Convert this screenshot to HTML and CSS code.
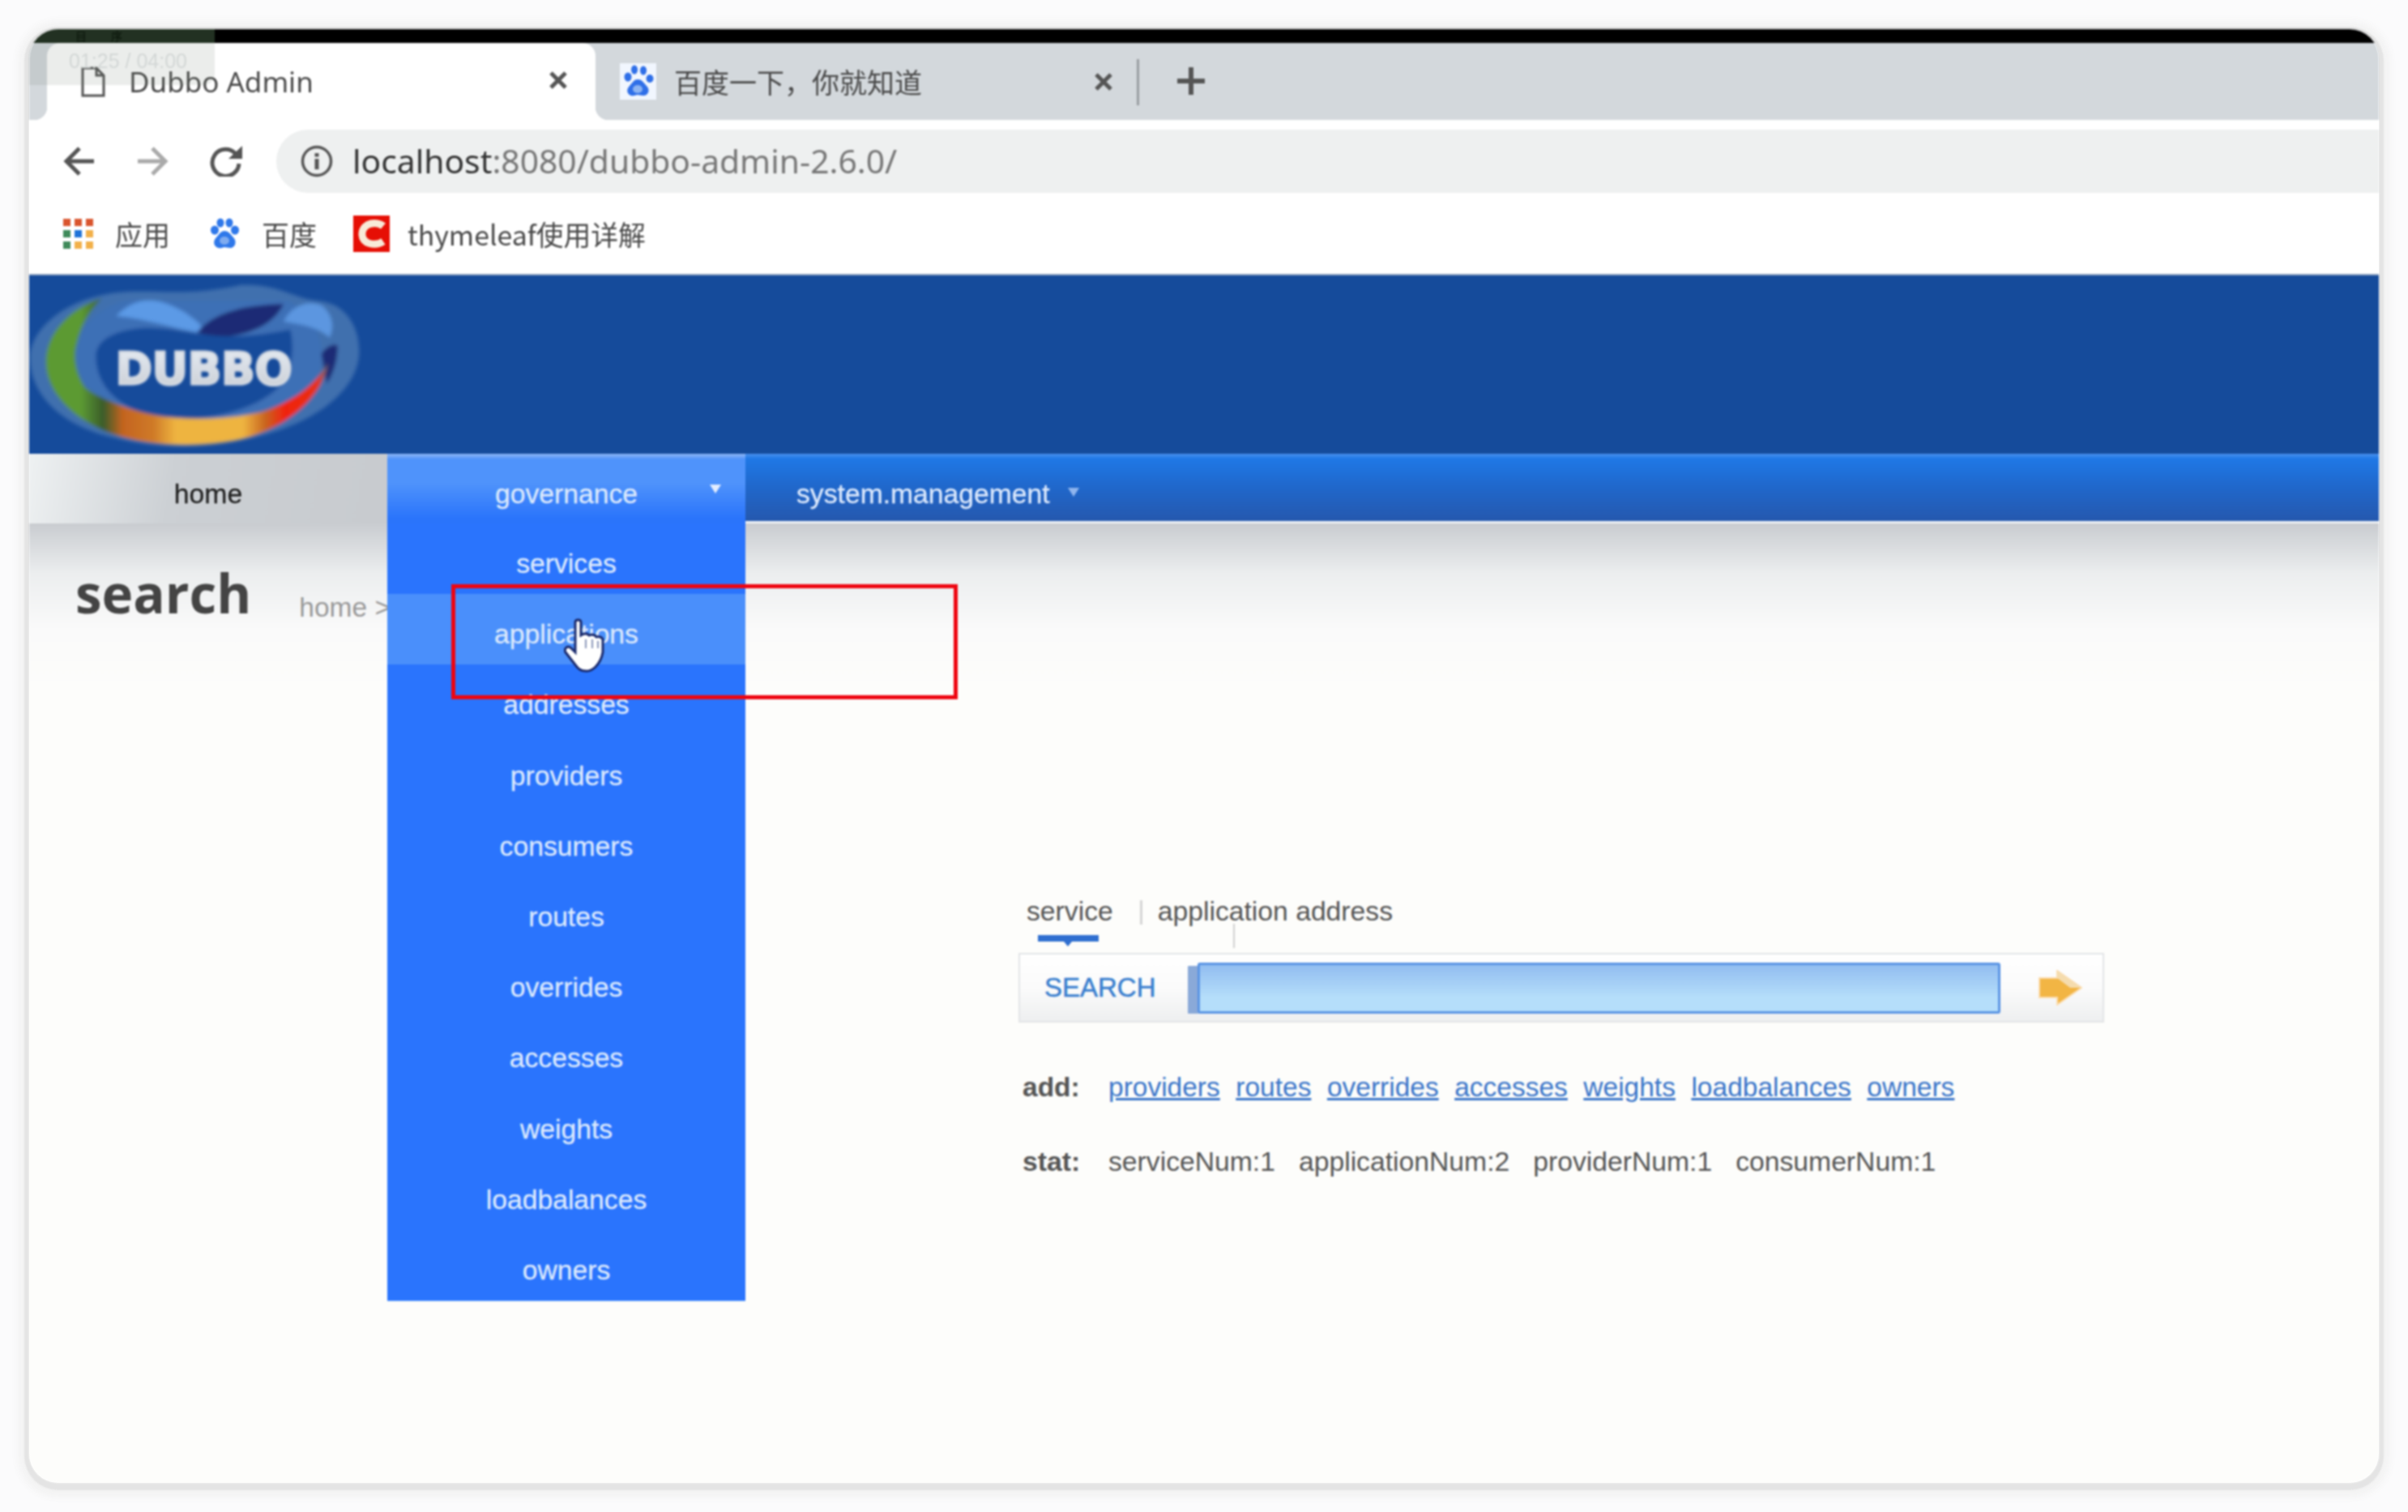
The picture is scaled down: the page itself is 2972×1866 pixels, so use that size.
FILE: index.html

```html
<!DOCTYPE html>
<html lang="en">
<head>
  <meta charset="UTF-8" />
  <title>Dubbo Admin</title>
  <link rel="stylesheet" href="styles.css">
</head>
<body>
  <div class="window">
    <div class="capbar"></div>

    <div class="tabstrip">
      <div class="tab tab-active">
        <svg class="doc-icon" viewBox="0 0 30 38"><path d="M2 2H19L28 11V36H2Z M19 2V11H28" fill="#fff" stroke="#555" stroke-width="3"/></svg>
        <span class="tab-title tab-title-en">Dubbo Admin</span>
        <svg class="close-icon" viewBox="0 0 22 22"><path d="M2 2L20 20M20 2L2 20" stroke="#555" stroke-width="5"/></svg>
      </div>
      <div class="tab">
        <svg class="paw paw-tab" viewBox="0 0 45 45">
          <rect width="45" height="45" fill="#f1f6fe"/>
          <g fill="#2f6fe8">
            <ellipse cx="10" cy="17" rx="4.5" ry="5.5"/>
            <ellipse cx="18" cy="8" rx="4" ry="5.5"/>
            <ellipse cx="29" cy="9" rx="4" ry="5.5"/>
            <ellipse cx="37" cy="19" rx="4.5" ry="5"/>
            <path d="M22 20C28 20 30 25 33 28C38 33 35 40 29 40C26 40 24 39 22 39C19 39 17 41 14 40C8 38 8 32 12 28C15 25 17 20 22 20Z"/>
          </g>
          <ellipse cx="22" cy="32" rx="6" ry="5" fill="#8db4f2"/>
        </svg>
        <span class="tab-title">百度一下，你就知道</span>
        <svg class="close-icon" viewBox="0 0 22 22"><path d="M2 2L20 20M20 2L2 20" stroke="#555" stroke-width="5"/></svg>
      </div>
      <div class="tab-sep"></div>
      <svg class="plus-icon" viewBox="0 0 34 34"><path d="M17 0V34M0 17H34" stroke="#555" stroke-width="6"/></svg>
    </div>

    <div class="toolbar">
      <svg class="nav-icon" viewBox="0 0 40 38"><path d="M38 19H5M20 3L4 19L20 35" fill="none" stroke="#555" stroke-width="5"/></svg>
      <svg class="nav-icon nav-forward" viewBox="0 0 40 38"><path d="M2 19H35M20 3L36 19L20 35" fill="none" stroke="#aaa" stroke-width="5"/></svg>
      <svg class="nav-icon nav-reload" viewBox="0 0 42 38"><path d="M33 10A16.5 16.5 0 1 0 37 22" fill="none" stroke="#555" stroke-width="5"/><path d="M24 16H41V0Z" fill="#555"/></svg>
      <div class="omnibox">
        <svg class="info-icon" viewBox="0 0 40 40"><circle cx="20" cy="20" r="17.5" fill="none" stroke="#555" stroke-width="3.5"/><rect x="17.500" y="17" width="5" height="13" fill="#555"/><rect x="17.500" y="10" width="5" height="4.500" fill="#555"/></svg>
        <span class="url"><b>localhost</b>:8080/dubbo-admin-2.6.0/</span>
      </div>
    </div>

    <div class="bookmarks">
      <div class="apps-grid">
        <i class="dot-a"></i><i class="dot-a"></i><i class="dot-a"></i>
        <i class="dot-b"></i><i class="dot-c"></i><i class="dot-d"></i>
        <i class="dot-b"></i><i class="dot-d"></i><i class="dot-d"></i>
      </div>
      <span class="mark mark-apps">应用</span>
      <svg class="paw paw-mark" viewBox="0 0 37 38">
        <g fill="#2f78ea">
          <ellipse cx="6" cy="15" rx="5" ry="5.500"/>
          <ellipse cx="13" cy="6" rx="4.500" ry="5.500"/>
          <ellipse cx="24" cy="6" rx="4.500" ry="5.500"/>
          <ellipse cx="31" cy="15" rx="5" ry="5.500"/>
          <path d="M18 16C24 16 26 21 29 24C34 29 31 37 25 37C22 37 20 36 18 36C16 36 14 38 11 37C5 36 3 29 8 24C11 21 13 16 18 16Z"/>
        </g>
        <ellipse cx="18" cy="28" rx="6" ry="5" fill="#7fabef"/>
      </svg>
      <span class="mark mark-baidu">百度</span>
      <svg class="csdn-icon" viewBox="0 0 45 45"><rect width="45" height="45" fill="#e60f05"/><path d="M37 13C30 7 12 8 11 22C10 36 28 38 37 32" fill="none" stroke="#f8ead8" stroke-width="9"/></svg>
      <span class="mark mark-thyme">thymeleaf使用详解</span>
    </div>

    <div class="banner">
      <svg class="logo" viewBox="18 0 1332 660">
        <defs>
          <linearGradient id="band" x1="85" y1="0" x2="1120" y2="0" gradientUnits="userSpaceOnUse">
            <stop offset="0" stop-color="#5c9a33"/>
            <stop offset=".12" stop-color="#5c9a33"/>
            <stop offset=".2" stop-color="#3a5c2a"/>
            <stop offset=".27" stop-color="#c4641f"/>
            <stop offset=".38" stop-color="#cf7a28"/>
            <stop offset=".46" stop-color="#eeb440"/>
            <stop offset=".7" stop-color="#eeb440"/>
            <stop offset=".78" stop-color="#c9651f"/>
            <stop offset=".85" stop-color="#f0230f"/>
            <stop offset=".97" stop-color="#e8300f"/>
            <stop offset="1" stop-color="#776a60"/>
          </linearGradient>
          <linearGradient id="steel" x1="0" y1="0" x2="0" y2="1">
            <stop offset="0" stop-color="#e8eef5"/>
            <stop offset="1" stop-color="#c6cbd2"/>
          </linearGradient>
          <filter id="soft"><feGaussianBlur stdDeviation="7"/></filter>
          <filter id="softer"><feGaussianBlur stdDeviation="2.500"/></filter>
        </defs>
        <g filter="url(#soft)">
          <path d="M20 300C30 180 180 70 380 60C520 55 620 75 800 35C950 30 1000 90 1100 95C1200 110 1240 200 1240 280C1240 420 1080 560 800 610C650 640 480 640 330 600C150 560 20 450 20 300Z" fill="#406fae"/>
          <path d="M190 300C190 190 300 90 420 90C560 100 700 90 980 95C1080 150 1110 240 1100 330C1070 480 800 560 600 560C350 550 190 440 190 300Z" fill="#3c6fb6"/>
          <path d="M340 150C420 70 500 80 600 140C640 170 680 195 640 210C550 195 450 160 340 150Z" fill="#5b9ae6"/>
          <path d="M640 210C700 140 800 110 960 105C930 170 860 210 760 225C710 228 670 222 640 210Z" fill="#1f2a75"/>
          <path d="M960 170C990 110 1050 90 1100 110C1140 140 1150 190 1130 230C1090 190 1020 180 960 170Z" fill="#5b96e0"/>
          <path d="M1100 290C1120 260 1150 250 1160 260C1160 320 1140 370 1120 400Z" fill="#1f2a75"/>
          <path d="M265 300C265 240 330 205 430 195C560 190 640 225 760 225C850 225 930 210 985 200C1000 260 1000 380 910 440C800 520 600 550 480 520C340 490 265 400 265 300Z" fill="#154b9b"/>
          <path d="M285 85C160 125 80 220 80 320C80 425 170 520 290 572C420 628 620 642 785 610C940 578 1095 475 1125 325C1075 410 990 470 880 505C760 535 570 540 450 510C340 480 250 440 222 410C190 360 180 300 195 250C210 180 245 130 285 85Z" fill="url(#band)"/>
        </g>
        <text class="logo-text" x="338" y="403" textLength="654" lengthAdjust="spacingAndGlyphs" filter="url(#softer)">DUBBO</text>
      </svg>
    </div>

    <div class="nav">
      <div class="nav-item nav-home">home</div>
      <div class="nav-item nav-open">
        governance<i class="caret"></i>
        <ul class="dropdown">
          <li>services</li>
          <li class="hover">applications</li>
          <li>addresses</li>
          <li>providers</li>
          <li>consumers</li>
          <li>routes</li>
          <li>overrides</li>
          <li>accesses</li>
          <li>weights</li>
          <li>loadbalances</li>
          <li>owners</li>
        </ul>
      </div>
      <div class="nav-rest">system.management<i class="caret caret-dim"></i></div>
    </div>

    <div class="content">
      <div class="page-title">
        <h1>search</h1>
        <span class="crumb">home &gt;</span>
      </div>

      <div class="search-panel">
        <div class="search-tabs">
          <span class="stab stab-on">service</span>
          <span class="stab-sep"></span>
          <span class="stab">application address</span>
          <i class="stab-mark"></i>
          <i class="stab-line"></i>
        </div>
        <div class="search-box">
          <span class="search-label">SEARCH</span>
          <div class="search-input"></div>
          <svg class="go-arrow" viewBox="0 0 55 44"><path d="M2 10H24V1L54 22L24 43V34H2Z" fill="#f2b544" stroke="#fbdcae" stroke-width="2"/><path d="M24 10V1L54 22H40Z" fill="#f5dcae"/></svg>
        </div>
        <div class="info-row info-add">
          <b>add:</b>
          <a href="#">providers</a>
          <a href="#">routes</a>
          <a href="#">overrides</a>
          <a href="#">accesses</a>
          <a href="#">weights</a>
          <a href="#">loadbalances</a>
          <a href="#">owners</a>
        </div>
        <div class="info-row info-stat">
          <b>stat:</b>
          <span>serviceNum:1</span>
          <span>applicationNum:2</span>
          <span>providerNum:1</span>
          <span>consumerNum:1</span>
        </div>
      </div>
    </div>

    <div class="video-hud">
      <div class="hud-top">目序</div>
      <div class="hud-time">01:25 / 04:00</div>
    </div>
    <div class="red-box"></div>
    <svg class="hand" viewBox="0 0 52 70">
      <path d="M14 6Q14 3 17.500 3Q21 3 21 6V22Q27 18 31 22Q37 20 40 24Q46 23 48 27V43Q46 54 39 61Q33 67 26 66Q20 66 16 61L2 43Q0 40 3 37Q6 35 9 38L14 43Z" fill="#fff" stroke="#1b2b6e" stroke-width="3"/>
      <path d="M27 27V38M35 27V38M42 29V38" stroke="#8a96b8" stroke-width="2" fill="none"/>
    </svg>
  </div>
</body>
</html>
```

FILE: styles.css

```css
* { box-sizing: border-box; }
html, body { margin: 0; height: 100%; }
body { padding: 36px; background: #fbfbfc; font-family: 'Liberation Sans', Arial, sans-serif; overflow: hidden; }

.window {
  position: relative; width: 2900px; height: 1794px; display: flex; flex-direction: column;
  background: #fdfdfb; border-radius: 36px; overflow: hidden;
  filter: blur(.8px);
}
body::before {
  content: ""; position: fixed; left: 36px; top: 36px; width: 2900px; height: 1794px; border-radius: 36px;
  box-shadow: 0 3px 2px 6px #e4e4e4, 0 4px 10px 14px #f3f3f3;
}

.capbar { height: 17px; background: #000; flex: none; }

/* browser chrome */
.tabstrip { height: 95px; flex: none; background: #d3d8dc; display: flex; padding-left: 22px; position: relative; }
.tab { width: 677px; height: 95px; display: flex; align-items: center; position: relative; }
.tab-active { background: #fff; border-radius: 16px 16px 0 0; padding-left: 42px; }
.tab-active::before, .tab-active::after { content: ""; position: absolute; bottom: 0; width: 16px; height: 16px; }
.tab-active::before { left: -16px; background: radial-gradient(circle at 0 0, transparent 16px, #fff 16.500px); }
.tab-active::after { right: -16px; background: radial-gradient(circle at 100% 0, transparent 16px, #fff 16.500px); }
.doc-icon { width: 30px; height: 38px; flex: none; }
.tab-title { font-family: 'Noto Sans CJK SC', sans-serif; font-size: 34px; color: #4a4a4a; white-space: nowrap; }
.tab-title-en { font-family: 'Noto Sans', sans-serif; font-size: 35px; margin-left: 29px; width: 519px; }
.close-icon { width: 22px; height: 22px; flex: none; }
.tab-active .close-icon { margin-bottom: 4px; }
.tab-active + .tab { width: 638px; padding-left: 30px; }
.paw-tab { width: 45px; height: 45px; flex: none; }
.tab-active + .tab .tab-title { margin-left: 22px; width: 519px; }
.tab-sep { width: 3px; height: 57px; background: #9a9ea2; margin: 20px 0 0 30px; }
.plus-icon { width: 34px; height: 34px; margin: 30px 0 0 47px; }

.toolbar { height: 90px; flex: none; background: #fff; display: flex; align-items: flex-start; padding: 12px 0 0 42px; }
.nav-icon { width: 40px; height: 38px; margin-top: 20px; flex: none; }
.nav-forward { margin-left: 50px; }
.nav-reload { margin-left: 50px; width: 42px; }
.omnibox { margin-left: 41px; flex: 1; height: 78px; background: #eef0f0; border-radius: 39px 0 0 39px; display: flex; align-items: center; padding-left: 30px; }
.info-icon { width: 40px; height: 40px; flex: none; }
.url { margin-left: 24px; margin-bottom: 2px; font-family: 'Noto Sans', sans-serif; font-size: 40.800px; color: #777; white-space: nowrap; }
.url b { font-weight: 400; color: #333; }

.bookmarks { height: 100px; flex: none; background: #fff; display: flex; align-items: center; padding: 0 0 0 42px; }
.apps-grid { width: 37px; height: 37px; display: grid; grid-template-columns: repeat(3, 9px); grid-auto-rows: 9px; gap: 5px; flex: none; }
.apps-grid i { display: block; }
.dot-a { background: #d9552e; }
.dot-b { background: #3f8a5a; }
.dot-c { background: #1f73d8; }
.dot-d { background: #f2b04a; }
.mark { font-family: 'Noto Sans CJK SC', sans-serif; font-size: 34px; color: #4a4a4a; white-space: nowrap; }
.mark-apps { margin-left: 27px; }
.paw-mark { width: 37px; height: 38px; margin-left: 49px; flex: none; }
.mark-baidu { margin-left: 27px; }
.csdn-icon { width: 45px; height: 45px; margin-left: 45px; flex: none; }
.mark-thyme { margin-left: 22px; font-size: 33.800px; }

/* dubbo page */
.banner { height: 222px; flex: none; background: #154b9b; border-top: 2px solid #8aa0c0; }
.logo { display: block; width: 444px; height: 220px; }
.logo-text { font-family: 'DejaVu Sans', sans-serif; font-weight: 700; font-size: 164px; fill: url(#steel); stroke: #d8dde4; stroke-width: 9px; }

.nav { height: 86px; flex: none; display: flex; font-size: 33.700px; position: relative; z-index: 2; -webkit-text-stroke: .3px; }
.nav-item { width: 442px; text-align: center; padding-top: 29px; line-height: 40px; position: relative; }
.nav-home { color: #222; background: linear-gradient(100deg, #eef1f2, #ccd0d4 40%, #c8cbcf); }
.nav-open { color: #dce9fd; background: linear-gradient(#8db6f6 0, #4f93fb 7px, #4f93fb 36px, #2a74fb 80px); }
.nav-rest { flex: 1; height: 86px; padding: 29px 0 0 63px; line-height: 40px; color: #dce9fd; background: linear-gradient(#4a90ee 0, #1f78e6 6px, #2068cc 40px, #2558ae 83px); border-bottom: 3px solid #eef2f6; }
.caret { position: absolute; right: 30px; top: 38px; border-left: 7px solid transparent; border-right: 7px solid transparent; border-top: 11px solid #e3edfe; }
.caret-dim { position: static; display: inline-block; margin: 0 0 0 22px; vertical-align: 8px; border-top-color: #8fb5ee; }

.dropdown { position: absolute; left: 0; top: 86px; width: 442px; margin: 0; padding: 0; list-style: none; background: #2a74fd; border-bottom: 1px solid #8fbdf8; }
.dropdown li { height: 87.200px; padding-top: 13px; line-height: 73px; text-align: center; color: #dce9fd; }
.dropdown li.hover { background: #4a8ffb; }

.content { flex: 1; background: linear-gradient(#c9ccd0 0, #eceeef 62px, #fafafa 130px, #fdfdfb 200px); }
.page-title { height: 120px; padding: 46px 0 0 57px; display: flex; align-items: flex-start; }
.page-title h1 { margin: 0; font-family: 'Open Sans', sans-serif; font-weight: 700; font-size: 65.500px; line-height: 80px; color: #444; }
.crumb { margin: 38px 0 0 59px; font-size: 33.500px; line-height: 40px; color: #999; white-space: nowrap; }

.search-panel { margin: 339px 0 0 1221px; width: 1340px; }
.search-tabs { height: 71px; position: relative; display: flex; padding-left: 10px; font-size: 33.700px; color: #555; line-height: 38px; }
.stab-sep { width: 3px; height: 30px; background: #d5d5d5; margin: 6px 19px 0 33px; }
.stab-mark { position: absolute; left: 24px; top: 49px; width: 75px; height: 8px; background: #2f6fd0; }
.stab-mark::after { content: ""; position: absolute; left: 32px; top: 8px; border-left: 5px solid transparent; border-right: 5px solid transparent; border-top: 6px solid #2f6fd0; }
.stab-line { position: absolute; left: 265px; top: 35px; width: 2px; height: 30px; background: #d0d0d0; }

.search-box { height: 86px; display: flex; align-items: center; padding-left: 30px; background: linear-gradient(#fff 0, #fbfbfb 50%, #eeeff0); border: 2px solid #e3e5e7; }
.search-label { width: 189px; font-size: 33px; color: #3a7fcf; flex: none; -webkit-text-stroke: .5px #3a7fcf; }
.search-input { width: 991px; height: 63px; flex: none; border: 3px solid #5a94e4; border-radius: 3px; background: linear-gradient(#92bdf0, #b5defa 70%); box-shadow: -14px 2px 0 -2px #8aa9d8; }
.go-arrow { width: 55px; height: 44px; margin-left: 46px; flex: none; }

.info-row { display: flex; font-size: 33.700px; line-height: 40px; color: #555; padding-left: 5px; white-space: nowrap; }
.info-row b { width: 106px; flex: none; color: #555; }
.info-add { margin-top: 60px; gap: 19.500px; font-size: 33.500px; }
.info-add b { margin-right: -19.500px; }
.info-add a { color: #3a75c9; text-decoration: underline; }
.info-stat { margin-top: 51px; gap: 29px; }
.info-stat b { margin-right: -29px; }

/* things lying over the page */
.video-hud { position: absolute; left: 0; top: 0; width: 229px; height: 69px; background: rgba(110, 130, 115, .14); border-radius: 0 0 14px 0; z-index: 3; }
.hud-top { height: 17px; background: rgba(70, 110, 70, .35); font-family: 'Noto Sans CJK SC', sans-serif; font-size: 14px; line-height: 17px; padding-left: 57px; color: #0a150a; letter-spacing: 30px; white-space: nowrap; }
.hud-time { margin: 8px 0 0 49px; font-size: 25px; line-height: 28px; color: #d3d7d6; }
.red-box { position: absolute; left: 521px; top: 685px; width: 625px; height: 142px; border: 5px solid #ee0510; z-index: 4; }
.hand { position: absolute; left: 660px; top: 726px; width: 52px; height: 70px; z-index: 5; }
```
